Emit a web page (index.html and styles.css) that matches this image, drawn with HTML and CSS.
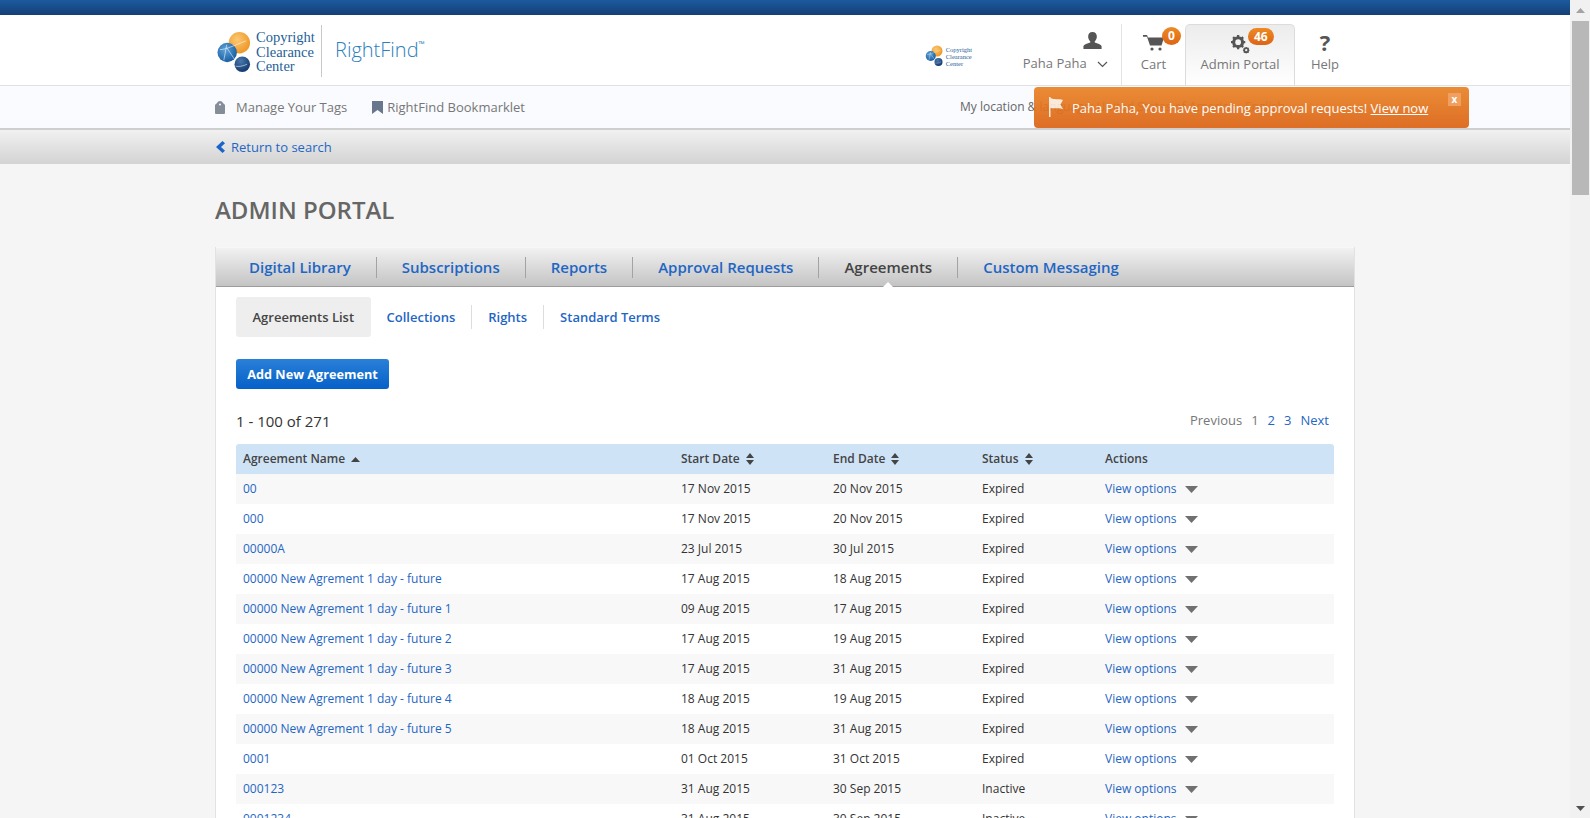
FILE: index.html
```html
<!DOCTYPE html>
<html lang="en">
<head>
    <meta charset="UTF-8">
    <title>Admin Portal - RightFind</title>
    <link rel="stylesheet" href="styles.css">
</head>
<body>

<svg class="defs" width="0" height="0">
    <defs>
        <radialGradient id="orange" cx="40%" cy="35%" r="70%"><stop offset="0" stop-color="#fbc874"/><stop offset="1" stop-color="#ee9420"/></radialGradient>
        <radialGradient id="blue" cx="40%" cy="35%" r="70%"><stop offset="0" stop-color="#5fa3da"/><stop offset="1" stop-color="#135a9e"/></radialGradient>
        <radialGradient id="navy" cx="40%" cy="30%" r="70%"><stop offset="0" stop-color="#4a78ad"/><stop offset="1" stop-color="#12396f"/></radialGradient>
        <symbol id="globes" viewBox="0 0 36 44">
            <circle cx="23" cy="12" r="11" fill="url(#orange)"/>
            <circle cx="10.5" cy="22" r="10" fill="url(#blue)"/>
            <circle cx="26" cy="34" r="8" fill="url(#navy)"/>
            <path d="M3 19c6 0 14-4 27-9M10 14l-3 16M10 17l8 12M19 36c3 1 8 0 12-2" fill="none" stroke="#fff" stroke-width=".7" opacity=".8"/>
        </symbol>
        <symbol id="sort" viewBox="0 0 8 12">
            <path d="M4 0l4 5H0zM4 12L0 7h8z" fill="#444"/>
        </symbol>
        <symbol id="caret" viewBox="0 0 13 7">
            <path d="M0 0h13L6.500 7z" fill="#707070"/>
        </symbol>
    </defs>
</svg>

<div class="page">
    <div class="top-bar"></div>

    <header class="header">
        <div class="wrap header-inner">
            <a class="logo">
                <svg class="logo-globes"><use href="#globes"/></svg>
                <span class="logo-text">Copyright<br>Clearance<br>Center</span>
            </a>
            <span class="brand">RightFind<sup>™</sup></span>

            <div class="client-logo">
                <svg class="client-globes"><use href="#globes"/></svg>
                <span class="client-text">Copyright<br>Clearance<br>Center</span>
            </div>

            <nav class="tools">
                <a class="tool tool-user">
                    <svg class="tool-icon" width="19" height="17" viewBox="0 0 20 18"><path d="M10 0c3 0 4.600 2.200 4.600 5 0 2-1 3.800-2.200 4.800v1.300c3 .9 6.600 2.100 7.200 3.700V18H.4v-3.200c.6-1.600 4.200-2.800 7.200-3.700V9.800C6.400 8.800 5.400 7 5.400 5 5.400 2.200 7 0 10 0z" fill="#555"/></svg>
                    <span class="tool-label">Paha Paha
                        <svg class="chevron" width="11" height="7" viewBox="0 0 11 7"><path d="M1 1l4.500 4.500L10 1" fill="none" stroke="#555" stroke-width="1.200"/></svg>
                    </span>
                </a>
                <a class="tool tool-cart">
                    <svg class="tool-icon" width="22" height="16" viewBox="0 0 22 16"><path d="M0 0h4l1 2.500h16l-2.500 8H7L4 1.800H0z" fill="#555"/><circle cx="9" cy="14" r="1.600" fill="#555"/><circle cx="17" cy="14" r="1.600" fill="#555"/></svg>
                    <span class="badge badge-cart">0</span>
                    <span class="tool-label">Cart</span>
                </a>
                <a class="tool tool-admin">
                    <svg class="tool-icon" width="19" height="19" viewBox="0 0 20 20">
                        <circle cx="7.500" cy="7.500" r="4.800" fill="none" stroke="#555" stroke-width="3"/>
                        <path d="M7.500 0v15M0 7.500h15M2.200 2.200l10.600 10.600M12.800 2.200L2.200 12.800" stroke="#555" stroke-width="2.400"/>
                        <circle cx="7.500" cy="7.500" r="3" fill="#f2f2f2"/>
                        <circle cx="16" cy="16" r="2.200" fill="none" stroke="#555" stroke-width="1.600"/>
                        <path d="M16 12.500v7M12.500 16h7M13.500 13.500l5 5M18.500 13.500l-5 5" stroke="#555" stroke-width="1.100"/>
                        <circle cx="16" cy="16" r="1.200" fill="#f2f2f2"/>
                    </svg>
                    <span class="badge badge-admin">46</span>
                    <span class="tool-label">Admin Portal</span>
                </a>
                <a class="tool tool-help">
                    <span class="help-mark">?</span>
                    <span class="tool-label">Help</span>
                </a>
            </nav>
        </div>
    </header>

    <div class="subnav">
        <div class="wrap subnav-inner">
            <a class="subnav-link tags">
                <svg width="10" height="13" viewBox="0 0 10 13"><path fill-rule="evenodd" d="M0 12V4.500C0 3.500 1 3 2 2c.6-1.300 1.600-2 3-2s2.400.7 3 2c1 1 2 1.500 2 2.500V12a1 1 0 0 1-1 1H1a1 1 0 0 1-1-1zM5 2.500a1 1 0 1 0 0 2 1 1 0 0 0 0-2z" fill="#858e98"/></svg>
                Manage Your Tags
            </a>
            <a class="subnav-link bookmarklet">
                <svg width="11" height="13" viewBox="0 0 11 13"><path d="M0 0h11v13L5.500 9 0 13z" fill="#69778c"/></svg>
                RightFind Bookmarklet
            </a>
            <span class="location">My location &amp; language: United States of America - English</span>
        </div>

        <div class="alert">
            <svg class="alert-flag" width="14" height="20" viewBox="0 0 14 20"><path d="M0 0h1.500v20H0zM1.500 1C5 3 9 1.500 14 3l-2.500 4.500L14 12c-4-1.500-8.500 0-12.500-1z" fill="#fbe9d8"/></svg>
            <span>Paha Paha, You have pending approval requests! <a class="alert-link">View now</a></span>
            <span class="alert-close">x</span>
        </div>
    </div>

    <div class="back-bar">
        <div class="wrap">
            <a class="back-link">
                <svg width="9" height="12" viewBox="0 0 9 12"><path d="M6.500 0L9 2.200 5 6l4 3.800L6.500 12 0 6z" fill="#1a66c8"/></svg>
                Return to search
            </a>
        </div>
    </div>

    <main class="wrap">
        <h1 class="title">Admin Portal</h1>

        <section class="panel">
            <nav class="tabs">
                <a class="tab">Digital Library</a>
                <a class="tab">Subscriptions</a>
                <a class="tab">Reports</a>
                <a class="tab">Approval Requests</a>
                <a class="tab tab-active">Agreements</a>
                <a class="tab">Custom Messaging</a>
            </nav>

            <div class="panel-body">
                <nav class="subtabs">
                    <a class="subtab subtab-active">Agreements List</a>
                    <a class="subtab">Collections</a>
                    <a class="subtab">Rights</a>
                    <a class="subtab">Standard Terms</a>
                </nav>

                <a class="btn-primary">Add New Agreement</a>

                <div class="list-info">
                    <span class="count">1 - 100 of 271</span>
                    <div class="pager">
                        <span>Previous</span>
                        <span>1</span>
                        <a>2</a>
                        <a>3</a>
                        <a>Next</a>
                    </div>
                </div>

                <table class="grid">
                    <thead>
                        <tr>
                            <th class="col-name">Agreement Name <svg class="sort-up" width="9" height="5" viewBox="0 0 9 5"><path d="M4.500 0L9 5H0z" fill="#444"/></svg></th>
                            <th class="col-start">Start Date <svg class="sort"><use href="#sort"/></svg></th>
                            <th class="col-end">End Date <svg class="sort"><use href="#sort"/></svg></th>
                            <th class="col-status">Status <svg class="sort"><use href="#sort"/></svg></th>
                            <th>Actions</th>
                        </tr>
                    </thead>
                    <tbody>
                        <tr><td><a>00</a></td><td>17 Nov 2015</td><td>20 Nov 2015</td><td>Expired</td><td><a>View options</a><svg class="caret"><use href="#caret"/></svg></td></tr>
                        <tr><td><a>000</a></td><td>17 Nov 2015</td><td>20 Nov 2015</td><td>Expired</td><td><a>View options</a><svg class="caret"><use href="#caret"/></svg></td></tr>
                        <tr><td><a>00000A</a></td><td>23 Jul 2015</td><td>30 Jul 2015</td><td>Expired</td><td><a>View options</a><svg class="caret"><use href="#caret"/></svg></td></tr>
                        <tr><td><a>00000 New Agrement 1 day - future</a></td><td>17 Aug 2015</td><td>18 Aug 2015</td><td>Expired</td><td><a>View options</a><svg class="caret"><use href="#caret"/></svg></td></tr>
                        <tr><td><a>00000 New Agrement 1 day - future 1</a></td><td>09 Aug 2015</td><td>17 Aug 2015</td><td>Expired</td><td><a>View options</a><svg class="caret"><use href="#caret"/></svg></td></tr>
                        <tr><td><a>00000 New Agrement 1 day - future 2</a></td><td>17 Aug 2015</td><td>19 Aug 2015</td><td>Expired</td><td><a>View options</a><svg class="caret"><use href="#caret"/></svg></td></tr>
                        <tr><td><a>00000 New Agrement 1 day - future 3</a></td><td>17 Aug 2015</td><td>31 Aug 2015</td><td>Expired</td><td><a>View options</a><svg class="caret"><use href="#caret"/></svg></td></tr>
                        <tr><td><a>00000 New Agrement 1 day - future 4</a></td><td>18 Aug 2015</td><td>19 Aug 2015</td><td>Expired</td><td><a>View options</a><svg class="caret"><use href="#caret"/></svg></td></tr>
                        <tr><td><a>00000 New Agrement 1 day - future 5</a></td><td>18 Aug 2015</td><td>31 Aug 2015</td><td>Expired</td><td><a>View options</a><svg class="caret"><use href="#caret"/></svg></td></tr>
                        <tr><td><a>0001</a></td><td>01 Oct 2015</td><td>31 Oct 2015</td><td>Expired</td><td><a>View options</a><svg class="caret"><use href="#caret"/></svg></td></tr>
                        <tr><td><a>000123</a></td><td>31 Aug 2015</td><td>30 Sep 2015</td><td>Inactive</td><td><a>View options</a><svg class="caret"><use href="#caret"/></svg></td></tr>
                        <tr><td><a>0001234</a></td><td>31 Aug 2015</td><td>30 Sep 2015</td><td>Inactive</td><td><a>View options</a><svg class="caret"><use href="#caret"/></svg></td></tr>
                    </tbody>
                </table>
            </div>
        </section>
    </main>
</div>

<div class="scrollbar">
    <div class="scroll-btn"><svg width="9" height="5" viewBox="0 0 9 5"><path d="M4.500 0L9 5H0z" fill="#a3a3a3"/></svg></div>
    <div class="scroll-track"><div class="scroll-thumb"></div></div>
    <div class="scroll-btn"><svg width="9" height="5" viewBox="0 0 9 5"><path d="M0 0h9L4.500 5z" fill="#505050"/></svg></div>
</div>

</body>
</html>
```

FILE: styles.css
```css
html, body {
    height: 100%;
    margin: 0;
    overflow: hidden;
}
body {
    display: flex;
    font-family: "Open Sans", Arial, sans-serif;
    font-size: 12px;
    color: #333;
    background: #f5f5f5;
}
a {
    color: #1f66c4;
    text-decoration: none;
}
.defs {
    position: absolute;
}
.page {
    flex: 1;
    min-width: 0;
    height: 818px;
    overflow: hidden;
}
.wrap {
    width: 1140px;
    margin: 0 auto;
}

/* top of the page */
.top-bar {
    height: 15px;
    background: linear-gradient(#1c5a9e, #143f76);
}
.header {
    height: 70px;
    background: #fff;
    border-bottom: 1px solid #dfe1e6;
}
.header-inner {
    display: flex;
    height: 70px;
}
.logo {
    display: flex;
    align-items: center;
    width: 106px;
    height: 52px;
    margin-top: 10px;
    border-right: 1px solid #c9c9c9;
}
.logo-globes {
    width: 35px;
    height: 43px;
    margin: 3px 0 0 2px;
}
.logo-text {
    margin: 2px 0 0 4px;
    font-family: "Liberation Serif", serif;
    font-size: 14.500px;
    line-height: 14.500px;
    color: #1f5f99;
}
.brand {
    margin: 21px 0 0 13px;
    font-size: 20px;
    font-weight: 300;
    line-height: 28px;
    color: #2b80bd;
}
.brand sup {
    font-size: 8px;
    font-weight: 600;
    line-height: 0;
    vertical-align: 10px;
}
.client-logo {
    display: flex;
    align-items: center;
    height: 24px;
    margin: 29px 0 0 500px;
}
.client-globes {
    width: 19px;
    height: 22px;
}
.client-text {
    margin-left: 2px;
    font-family: "Liberation Serif", serif;
    font-size: 6.500px;
    line-height: 7px;
    color: #1f5f99;
}
.tools {
    display: flex;
    margin-left: auto;
}
.tool {
    position: relative;
    display: flex;
    flex-direction: column;
    align-items: center;
    box-sizing: border-box;
    height: 61px;
    margin-top: 9px;
    padding: 7px 0 12px;
    color: #666;
}
.tool-label {
    margin-top: auto;
    font-size: 13px;
    line-height: 18px;
    color: #777;
    white-space: nowrap;
}
.tool-user {
    align-items: flex-end;
    width: 122px;
    padding: 8px 13px 13px 0;
    border-right: 1px solid #e3e3e3;
}
.tool-user .tool-icon {
    margin-right: 6px;
}
.chevron {
    margin-left: 7px;
}
.tool-cart {
    width: 63px;
}
.tool-cart .tool-icon {
    margin-top: 4px;
}
.tool-admin {
    width: 110px;
    border: 1px solid #dcdcdc;
    border-bottom: 0;
    border-radius: 5px 5px 0 0;
    background: linear-gradient(#ececec, #fff);
}
.tool-admin .tool-icon {
    margin-top: 3px;
}
.tool-help {
    width: 60px;
}
.help-mark {
    font-size: 22px;
    font-weight: 700;
    line-height: 22px;
    color: #555;
}
.badge {
    position: absolute;
    min-width: 10px;
    padding: 0 5px;
    border-radius: 10px;
    background: linear-gradient(#ee8a24, #dd6414);
    color: #fff;
    font-size: 12px;
    font-weight: 700;
    line-height: 18px;
    text-align: center;
}
.badge-cart {
    top: 3px;
    left: 40px;
    min-width: 13px;
    padding: 0 3px;
    border-radius: 50%;
}
.badge-admin {
    top: 3px;
    left: 62px;
    padding: 0 6px;
    line-height: 17px;
}

/* second line */
.subnav {
    position: relative;
    height: 42px;
    background: #f9fbff;
    border-bottom: 2px solid #cfcfcf;
}
.subnav-inner {
    display: flex;
    align-items: center;
    height: 42px;
}
.subnav-link {
    display: flex;
    align-items: center;
    font-size: 13px;
    color: #777;
}
.tags svg {
    margin-right: 11px;
}
.bookmarklet {
    margin-left: 25px;
}
.bookmarklet svg {
    margin-right: 4px;
}
.location {
    margin-left: 435px;
    margin-top: -2px;
    font-size: 12px;
    color: #666;
    white-space: nowrap;
}
.alert {
    position: absolute;
    top: 1px;
    left: 1034px;
    display: flex;
    align-items: center;
    box-sizing: border-box;
    width: 435px;
    height: 41px;
    padding-left: 15px;
    border-radius: 4px;
    background: linear-gradient(#e98427, #dc6415);
    color: #fff;
    font-size: 13px;
    opacity: .93;
}
.alert-flag {
    margin-right: 9px;
    margin-top: -1px;
}
.alert-link {
    color: #fff;
    text-decoration: underline;
}
.alert-close {
    position: absolute;
    top: 6px;
    right: 8px;
    width: 13px;
    height: 13px;
    background: #ef9a55;
    color: #fff;
    font-size: 10px;
    font-weight: 700;
    line-height: 12px;
    text-align: center;
}
.back-bar {
    height: 34px;
    background: linear-gradient(#f1f1f1, #d3d3d3);
}
.back-link {
    display: inline-flex;
    align-items: center;
    height: 34px;
    margin-left: 1px;
    font-size: 13px;
}
.back-link svg {
    margin-right: 6px;
}

/* main content */
.title {
    margin: 0;
    padding-top: 31px;
    font-size: 24px;
    font-weight: 600;
    line-height: 30px;
    color: #666;
    text-transform: uppercase;
}
.panel {
    margin-top: 22px;
    background: #fff;
    border-left: 1px solid #e2e2e2;
    border-right: 1px solid #e2e2e2;
}
.tabs {
    display: flex;
    align-items: center;
    box-sizing: border-box;
    height: 40px;
    padding-left: 8px;
    border-bottom: 1px solid #9c9c9c;
    border-top: 1px solid #f7f7f7;
    background: linear-gradient(#f1f1f1, #c4c4c4);
}
.tab {
    position: relative;
    padding: 0 25px;
    border-right: 1px solid #a3a3a3;
    font-size: 15px;
    font-weight: 600;
    line-height: 21px;
    color: #1f66c4;
}
.tab:last-child {
    border-right: 0;
}
.tab-active {
    color: #444;
}
.tab-active::after {
    content: "";
    position: absolute;
    left: 50%;
    bottom: -10px;
    margin-left: -6px;
    border: 6px solid transparent;
    border-top: 0;
    border-bottom-color: #fff;
}
.panel-body {
    padding: 10px 20px 0;
}
.subtabs {
    display: flex;
    align-items: center;
    height: 40px;
}
.subtab {
    padding: 0 16px;
    border-right: 1px solid #ddd;
    font-size: 13px;
    font-weight: 600;
    line-height: 24px;
}
.subtab:last-child {
    border-right: 0;
}
.subtab-active {
    padding: 0 16.500px;
    border-right: 0;
    border-radius: 3px;
    background: #eee;
    color: #444;
    line-height: 40px;
}
.btn-primary {
    display: block;
    width: 153px;
    height: 30px;
    margin-top: 22px;
    border-radius: 3px;
    background: linear-gradient(#2a80d8, #0560c8);
    color: #fff;
    font-size: 12.700px;
    font-weight: 700;
    line-height: 30px;
    text-align: center;
}
.list-info {
    display: flex;
    justify-content: space-between;
    align-items: center;
    height: 24px;
    margin-top: 20px;
}
.count {
    font-size: 15px;
    color: #333;
}
.pager {
    display: flex;
    gap: 9px;
    padding-right: 5px;
    margin-top: -3px;
    font-size: 13px;
    color: #777;
}
.grid {
    width: 1098px;
    margin-top: 11px;
    border-collapse: collapse;
    table-layout: fixed;
}
.grid th {
    height: 29px;
    padding: 0 7px 1px;
    background: #cfe3f7;
    font-size: 12px;
    font-weight: 600;
    color: #444;
    text-align: left;
    white-space: nowrap;
}
.grid th:first-child {
    border-radius: 3px 0 0 0;
}
.grid th:last-child {
    border-radius: 0 3px 0 0;
}
.col-name {
    width: 424px;
}
.col-start {
    width: 138px;
}
.col-end {
    width: 135px;
}
.col-status {
    width: 109px;
}
.sort {
    width: 8px;
    height: 12px;
    margin-left: 3px;
    vertical-align: -2px;
}
.sort-up {
    margin-left: 3px;
    vertical-align: 1px;
}
.grid td {
    height: 29px;
    padding: 0 7px 1px;
    font-size: 12px;
    color: #333;
    white-space: nowrap;
}
.grid tbody tr:nth-child(odd) {
    background: #f8f8f8;
}
.caret {
    width: 13px;
    height: 7px;
    margin-left: 8px;
}

/* page scrollbar */
.scrollbar {
    display: flex;
    flex-direction: column;
    flex: none;
    width: 20px;
    height: 818px;
    background: #f1f1f1;
}
.scroll-btn {
    display: flex;
    align-items: center;
    justify-content: center;
    height: 20px;
}
.scroll-track {
    flex: 1;
}
.scroll-thumb {
    width: 17px;
    height: 174px;
    margin: 1px auto 0;
    background: #b8b8b8;
}
```
